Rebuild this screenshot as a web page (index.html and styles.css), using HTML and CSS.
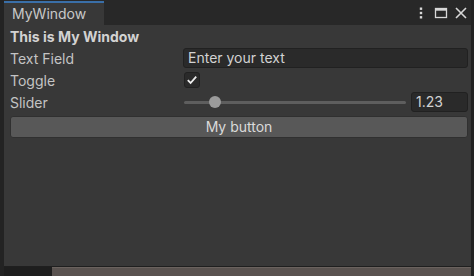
FILE: index.html
```html
<!DOCTYPE html>
<html>
<head>
<meta charset="utf-8">
<link rel="stylesheet" href="styles.css">
</head>
<body>
<div class="frame">
  <div class="window">
    <div class="tabbar">
      <div class="tab">MyWindow</div>
      <div class="tab-icons">
        <svg class="ico" width="14" height="14" viewBox="0 0 14 14"><rect x="5.8" y="1.5" width="2.4" height="2.4" fill="#d8d8d8"/><rect x="5.8" y="5.8" width="2.4" height="2.4" fill="#d8d8d8"/><rect x="5.8" y="10.1" width="2.4" height="2.4" fill="#d8d8d8"/></svg>
        <svg class="ico" width="14" height="14" viewBox="0 0 14 14"><rect x="1.5" y="2.5" width="11" height="9" fill="none" stroke="#d8d8d8" stroke-width="1.3"/><rect x="1.5" y="2.5" width="11" height="2.2" fill="#d8d8d8"/></svg>
        <svg class="ico" width="14" height="14" viewBox="0 0 14 14"><path d="M2 2 L12 12 M12 2 L2 12" stroke="#d8d8d8" stroke-width="1.6"/></svg>
      </div>
    </div>
    <div class="content">
      <div class="title">This is My Window</div>
      <div class="row">
        <div class="label">Text Field</div>
        <div class="field text">Enter your text</div>
      </div>
      <div class="row">
        <div class="label">Toggle</div>
        <div class="checkbox">
          <svg width="12" height="12" viewBox="0 0 12 12"><path d="M1.8 6.2 L4.6 9 L10.2 2.6" fill="none" stroke="#eeeeee" stroke-width="1.8"/></svg>
        </div>
      </div>
      <div class="row">
        <div class="label">Slider</div>
        <div class="slider">
          <div class="track"></div>
          <div class="thumb"></div>
        </div>
        <div class="field num">1.23</div>
      </div>
      <div class="button">My button</div>
    </div>
  </div>
  <div class="bottom">
    <div class="bottom-left"></div>
    <div class="bottom-right"></div>
  </div>
</div>
</body>
</html>
```
FILE: styles.css
```css
* { box-sizing: border-box; }
html, body { margin: 0; padding: 0; }
body {
  width: 474px;
  height: 276px;
  background: #232323;
  font-family: Inter, "Noto Sans", sans-serif;
  font-size: 14px;
  color: #c4c4c4;
  overflow: hidden;
}
.frame {
  height: 276px;
  display: flex;
  flex-direction: column;
  padding: 0 3px 0 4px;
}
.window {
  height: 267px;
  display: flex;
  flex-direction: column;
  background: #383838;
  border-bottom: 1px solid #1f1f1f;
}
.tabbar {
  height: 25px;
  background: #282828;
  display: flex;
  align-items: stretch;
  padding-top: 1px;
}
.tab {
  width: 100px;
  background: #383838;
  border-top: 2px solid #3a6fa8;
  padding: 2px 0 0 8px;
  font-size: 14px;
  color: #c8c8c8;
}
.tab-icons {
  margin-left: auto;
  display: flex;
  align-items: center;
  gap: 6px;
  padding-right: 3px;
}
.ico { display: block; }
.content {
  flex: 1;
  padding: 3px 3px 0 6px;
  display: flex;
  flex-direction: column;
}
.title {
  font-weight: 700;
  height: 19px;
  line-height: 18px;
  color: #d2d2d2;
}
.row {
  height: 22px;
  display: flex;
  align-items: center;
}
.label {
  width: 173px;
  flex: none;
}
.field {
  height: 20px;
  background: #2a2a2a;
  border: 1px solid #212121;
  border-radius: 3px;
  color: #d2d2d2;
  line-height: 18px;
  padding-left: 4px;
}
.text { flex: 1; }
.num { width: 57px; flex: none; margin-left: 5px; }
.checkbox {
  width: 16px;
  height: 16px;
  margin-left: 1px;
  background: #2a2a2a;
  border: 1px solid #212121;
  border-radius: 3px;
  display: flex;
  align-items: center;
  justify-content: center;
}
.checkbox svg { display: block; }
.slider {
  flex: 1;
  position: relative;
  height: 20px;
  display: flex;
  align-items: center;
  margin-left: 1px;
}
.track {
  flex: 1;
  height: 3px;
  background: #5e5e5e;
  border-radius: 2px;
}
.thumb {
  position: absolute;
  left: 25px;
  top: 4px;
  width: 12px;
  height: 12px;
  border-radius: 50%;
  background: #9b9b9b;
}
.button {
  margin-top: 3px;
  height: 22px;
  background: #585858;
  border: 1px solid #303030;
  border-radius: 3px;
  text-align: center;
  line-height: 20px;
  color: #dadada;
}
.bottom {
  flex: 1;
  display: flex;
}
.bottom-left { width: 48px; background: #1e1e1e; }
.bottom-right { flex: 1; background: #5a5350; border-top: 1px solid #6a625e; }
```
